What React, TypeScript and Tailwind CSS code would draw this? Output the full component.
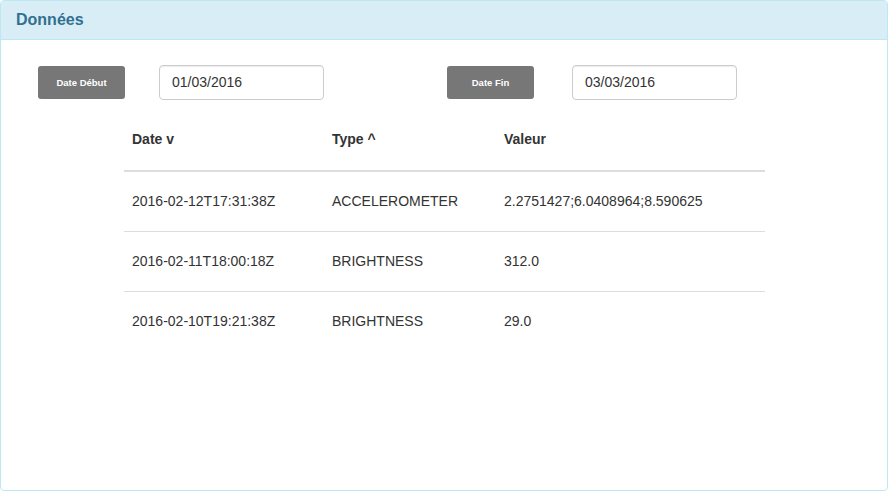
const rows = [
  { date: '2016-02-12T17:31:38Z', type: 'ACCELEROMETER', value: '2.2751427;6.0408964;8.590625' },
  { date: '2016-02-11T18:00:18Z', type: 'BRIGHTNESS', value: '312.0' },
  { date: '2016-02-10T19:21:38Z', type: 'BRIGHTNESS', value: '29.0' },
];

function DateField({ label, value }: { label: string; value: string }) {
  return (
    <>
      <button className="w-[87px] h-[33px] pt-[1px] rounded-[3px] bg-[#777777] text-white text-[9.5px] font-bold shrink-0">
        {label}
      </button>
      <div className="w-[165px] h-[35px] rounded-[4px] border border-[#cccccc] flex items-center px-[12px] text-[14px] text-[#333] shadow-[inset_0_1px_1px_rgba(0,0,0,0.075)] shrink-0">
        {value}
      </div>
    </>
  );
}

export default function App() {
  return (
    <div className="w-[888px] h-[491px] bg-white font-['Liberation_Sans',Arial,sans-serif] text-[#333]">
      <div className="h-[491px] w-[888px] border border-[#bce8f1] rounded-[4px] flex flex-col overflow-hidden">
        <div className="h-[39px] shrink-0 bg-[#d9edf7] border-b border-[#bce8f1] px-[15px] flex items-center">
          <h3 className="text-[16px] text-[#31708f] font-semibold leading-none">Données</h3>
        </div>

        <div className="flex-1 pt-[25px]">
          <div className="flex items-center">
            <div className="ml-[37px] flex items-center gap-[34px]">
              <DateField label="Date Début" value="01/03/2016" />
            </div>
            <div className="ml-[123px] flex items-center gap-[38px]">
              <DateField label="Date Fin" value="03/03/2016" />
            </div>
          </div>

          <table className="ml-[123px] mt-[9px] w-[641px] table-fixed border-collapse text-[14px]">
            <colgroup>
              <col className="w-[200px]" />
              <col className="w-[172px]" />
              <col />
            </colgroup>
            <thead>
              <tr>
                <th className="h-[62px] px-[8px] text-left font-bold border-b-2 border-[#dddddd]">Date v</th>
                <th className="h-[62px] px-[8px] text-left font-bold border-b-2 border-[#dddddd]">Type ^</th>
                <th className="h-[62px] px-[8px] text-left font-bold border-b-2 border-[#dddddd]">Valeur</th>
              </tr>
            </thead>
            <tbody>
              {rows.map((r, i) => (
                <tr key={r.date} className={i > 0 ? 'border-t border-[#dddddd]' : ''}>
                  <td className="h-[60px] px-[8px]">{r.date}</td>
                  <td className="h-[60px] px-[8px]">{r.type}</td>
                  <td className="h-[60px] px-[8px]">{r.value}</td>
                </tr>
              ))}
            </tbody>
          </table>
        </div>
      </div>
    </div>
  );
}
